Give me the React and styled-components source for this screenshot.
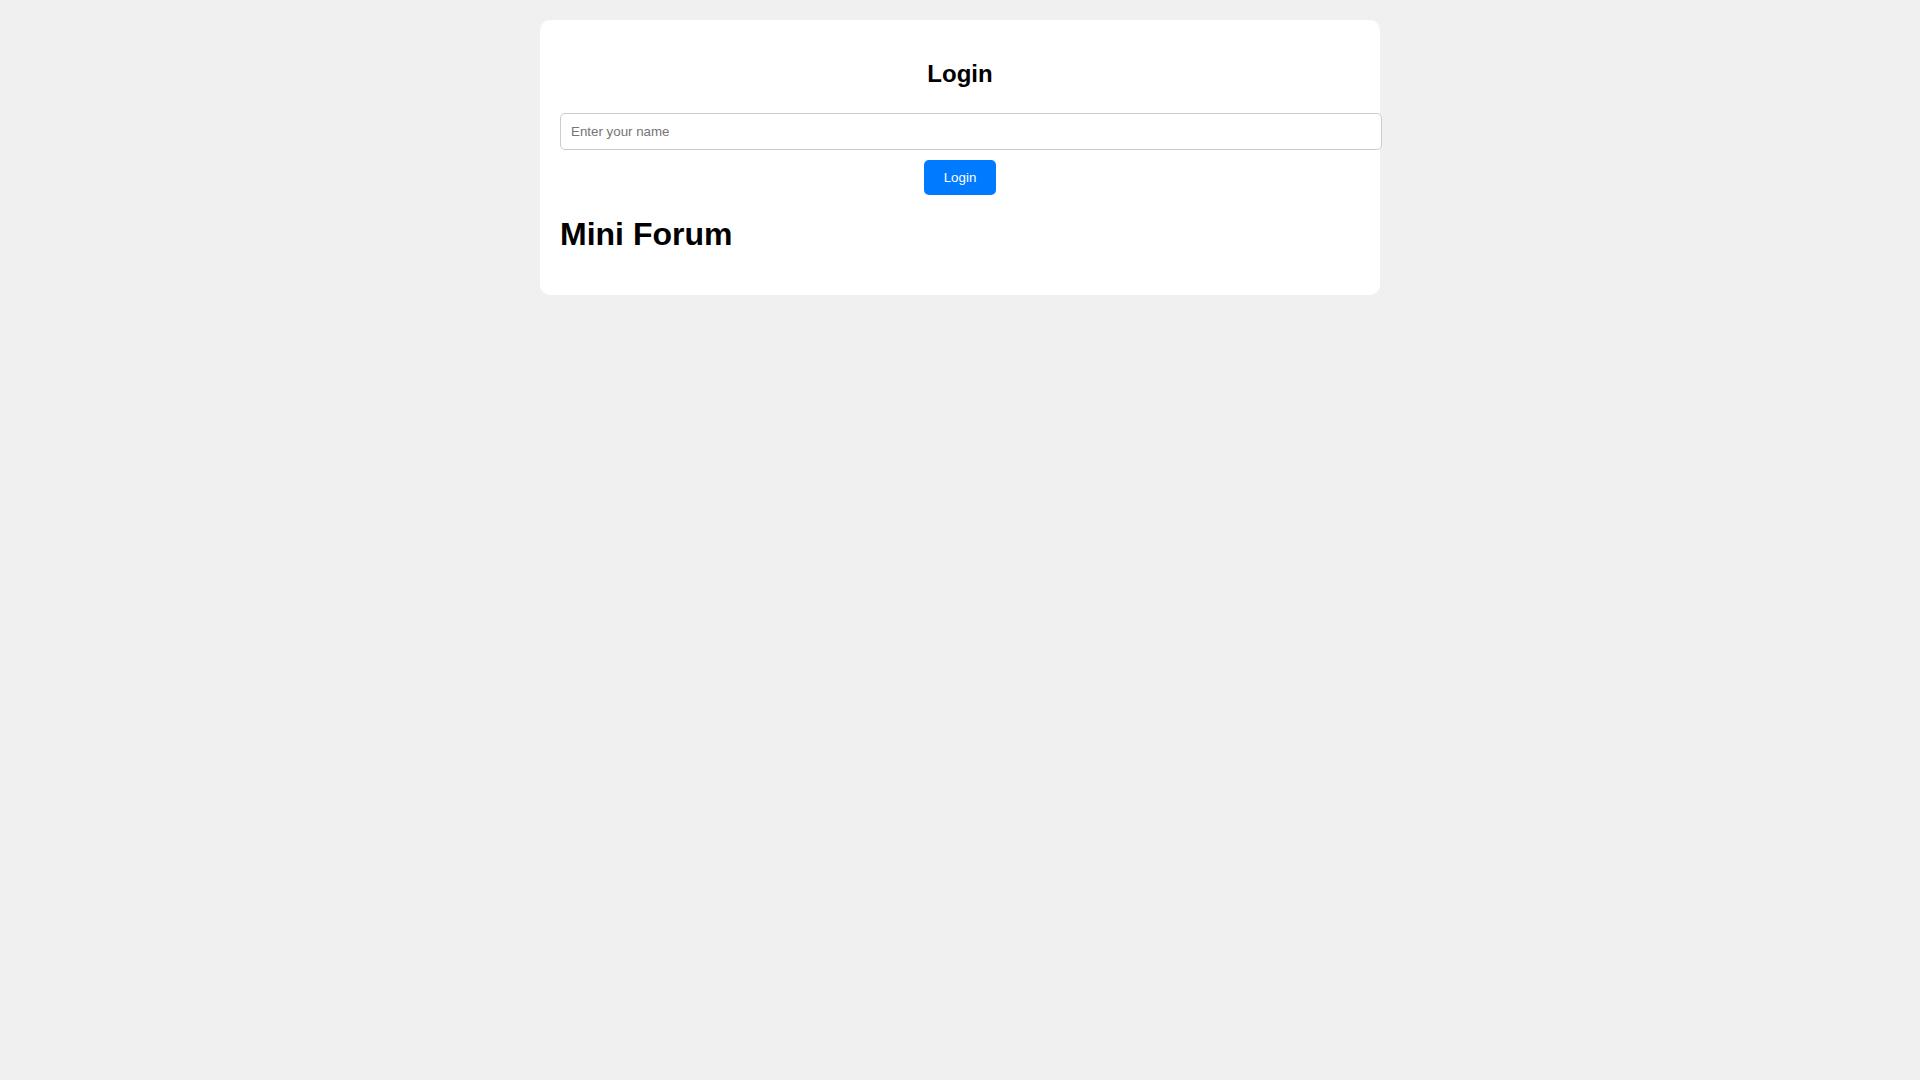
import React, { useState } from "react";
import styled, { createGlobalStyle } from "styled-components";

const GlobalStyle = createGlobalStyle`
  body {
    margin: 0;
    background-color: #f0f0f0;
    font-family: "Liberation Sans", Arial, sans-serif;
  }
`;

const Container = styled.div`
  max-width: 800px;
  margin: 20px auto;
  padding: 20px;
  background-color: #fff;
  border-radius: 10px;
`;

const LoginBox = styled.div`
  display: flex;
  flex-direction: column;
`;

const LoginTitle = styled.h2`
  font-size: 24px;
  font-weight: bold;
  margin: 0.83em 0;
  text-align: center;
  color: #000;
`;

const NameInput = styled.input`
  box-sizing: content-box;
  width: 100%;
  margin: 5px 0 0;
  padding: 10px;
  border: 1px solid #ccc;
  border-radius: 5px;
  font-family: "Liberation Sans", Arial, sans-serif;
  font-size: 13.333px;
  color: #000;
  outline: none;

  &::placeholder {
    color: #757575;
  }
`;

const Button = styled.button`
  align-self: center;
  margin-top: 10px;
  padding: 10px 20px;
  background-color: #007bff;
  color: #fff;
  border: none;
  border-radius: 5px;
  font-family: "Liberation Sans", Arial, sans-serif;
  font-size: 13.333px;
  cursor: pointer;
`;

const Title = styled.h1`
  font-size: 32px;
  font-weight: bold;
  margin: 0.67em 0;
  color: #000;
`;

const App = () => {
  const [name, setName] = useState("");

  return (
    <>
      <GlobalStyle />
      <Container>
        <LoginBox>
          <LoginTitle>Login</LoginTitle>
          <NameInput
            type="text"
            placeholder="Enter your name"
            value={name}
            onChange={(e) => setName(e.target.value)}
          />
          <Button>Login</Button>
        </LoginBox>
        <Title>Mini Forum</Title>
      </Container>
    </>
  );
};

export default App;
